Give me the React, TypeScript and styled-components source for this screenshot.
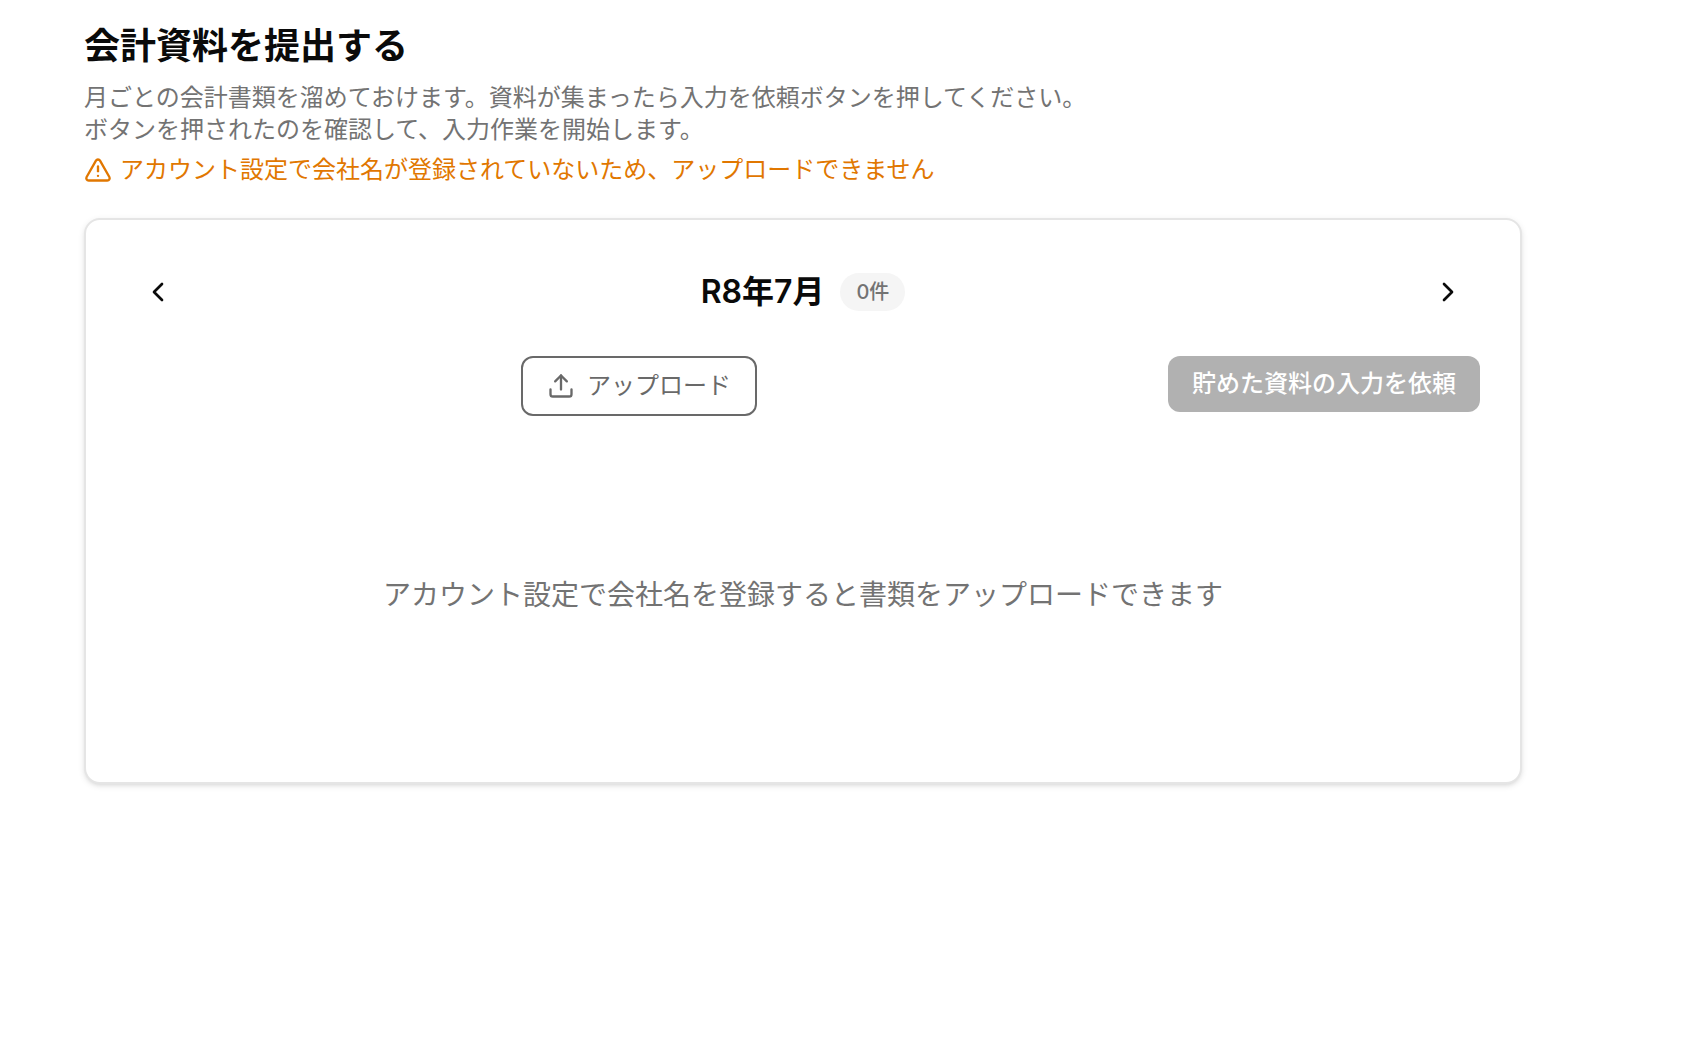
import React, { useState } from "react";
import styled, { createGlobalStyle } from "styled-components";
import { ChevronLeft, ChevronRight, TriangleAlert, Upload } from "lucide-react";

const GlobalStyle = createGlobalStyle`
  *, *::before, *::after { box-sizing: border-box; }
  body {
    margin: 0;
    background: #fff;
    color: #0a0a0a;
    font-family: Inter, "Noto Sans CJK JP", sans-serif;
    font-size: 24px;
    line-height: 32px;
  }
  button { font: inherit; cursor: pointer; }
  button:disabled { cursor: not-allowed; }
`;

const Page = styled.main`
  padding: 22px 166px 80px 84px;
`;

const PageHeader = styled.header`
  display: flex;
  flex-direction: column;
  gap: 8px;
  margin-bottom: 32px;
`;

const Title = styled.h1`
  margin: 0 0 4px;
  font-size: 36px;
  line-height: 48px;
  font-weight: 700;
`;

const Description = styled.p`
  margin: 0;
  color: #737373;
`;

const Warning = styled.p`
  display: flex;
  align-items: center;
  gap: 8px;
  margin: 0;
  color: #e17700;
  svg { flex: none; }
`;

const Card = styled.section`
  display: flex;
  flex-direction: column;
  gap: 32px;
  padding: 40px;
  border: 2px solid #e5e5e5;
  border-radius: 16px;
  background: #fff;
  box-shadow: 0 2px 6px rgba(0, 0, 0, 0.1), 0 2px 4px -2px rgba(0, 0, 0, 0.1);
`;

const MonthNav = styled.nav`
  display: flex;
  align-items: center;
  justify-content: space-between;
`;

const IconButton = styled.button`
  display: grid;
  place-items: center;
  width: 64px;
  height: 64px;
  padding: 0;
  border: 0;
  border-radius: 12px;
  background: transparent;
  color: #0a0a0a;
`;

const Month = styled.div`
  display: flex;
  align-items: center;
  gap: 16px;
`;

const MonthName = styled.h2`
  margin: 0;
  font-size: 32px;
  line-height: 40px;
  font-weight: 600;
`;

const Count = styled.span`
  padding: 4px 16px;
  border-radius: 20px;
  background: #f5f5f5;
  color: #737373;
  font-size: 20px;
  line-height: 30px;
  font-weight: 500;
`;

const Actions = styled.div`
  display: flex;
  align-items: flex-start;
  gap: 16px;
`;

const UploadSlot = styled.div`
  flex: 1;
  display: flex;
  justify-content: center;
`;

const ActionButton = styled.button<{ $filled?: boolean }>`
  display: flex;
  align-items: center;
  gap: 12px;
  padding: 12px 24px;
  border: ${(p) => (p.$filled ? "0" : "2px solid #696969")};
  border-radius: 12px;
  background: ${(p) => (p.$filled ? "#b1b1b1" : "#fff")};
  color: ${(p) => (p.$filled ? "#fff" : "#696969")};
  font-weight: ${(p) => (p.$filled ? 500 : 400)};
`;

const Empty = styled.p`
  margin: 0;
  padding: 128px 0;
  text-align: center;
  color: #737373;
  font-size: 28px;
  line-height: 38px;
`;

export default function App() {
  const [month, setMonth] = useState(7);
  return (
    <>
      <GlobalStyle />
      <Page>
        <PageHeader>
          <Title>会計資料を提出する</Title>
          <Description>
            月ごとの会計書類を溜めておけます。資料が集まったら入力を依頼ボタンを押してください。
            <br />
            ボタンを押されたのを確認して、入力作業を開始します。
          </Description>
          <Warning>
            <TriangleAlert size={28} aria-hidden="true" />
            アカウント設定で会社名が登録されていないため、アップロードできません
          </Warning>
        </PageHeader>
        <Card>
          <MonthNav>
            <IconButton type="button" aria-label="前の月" onClick={() => setMonth((m) => Math.max(1, m - 1))}>
              <ChevronLeft size={32} />
            </IconButton>
            <Month>
              <MonthName>R8年{month}月</MonthName>
              <Count>0件</Count>
            </Month>
            <IconButton type="button" aria-label="次の月" onClick={() => setMonth((m) => Math.min(12, m + 1))}>
              <ChevronRight size={32} />
            </IconButton>
          </MonthNav>
          <Actions>
            <UploadSlot>
              <ActionButton type="button" disabled>
                <Upload size={28} aria-hidden="true" />
                アップロード
              </ActionButton>
            </UploadSlot>
            <ActionButton type="button" $filled disabled>
              貯めた資料の入力を依頼
            </ActionButton>
          </Actions>
          <Empty>アカウント設定で会社名を登録すると書類をアップロードできます</Empty>
        </Card>
      </Page>
    </>
  );
}
